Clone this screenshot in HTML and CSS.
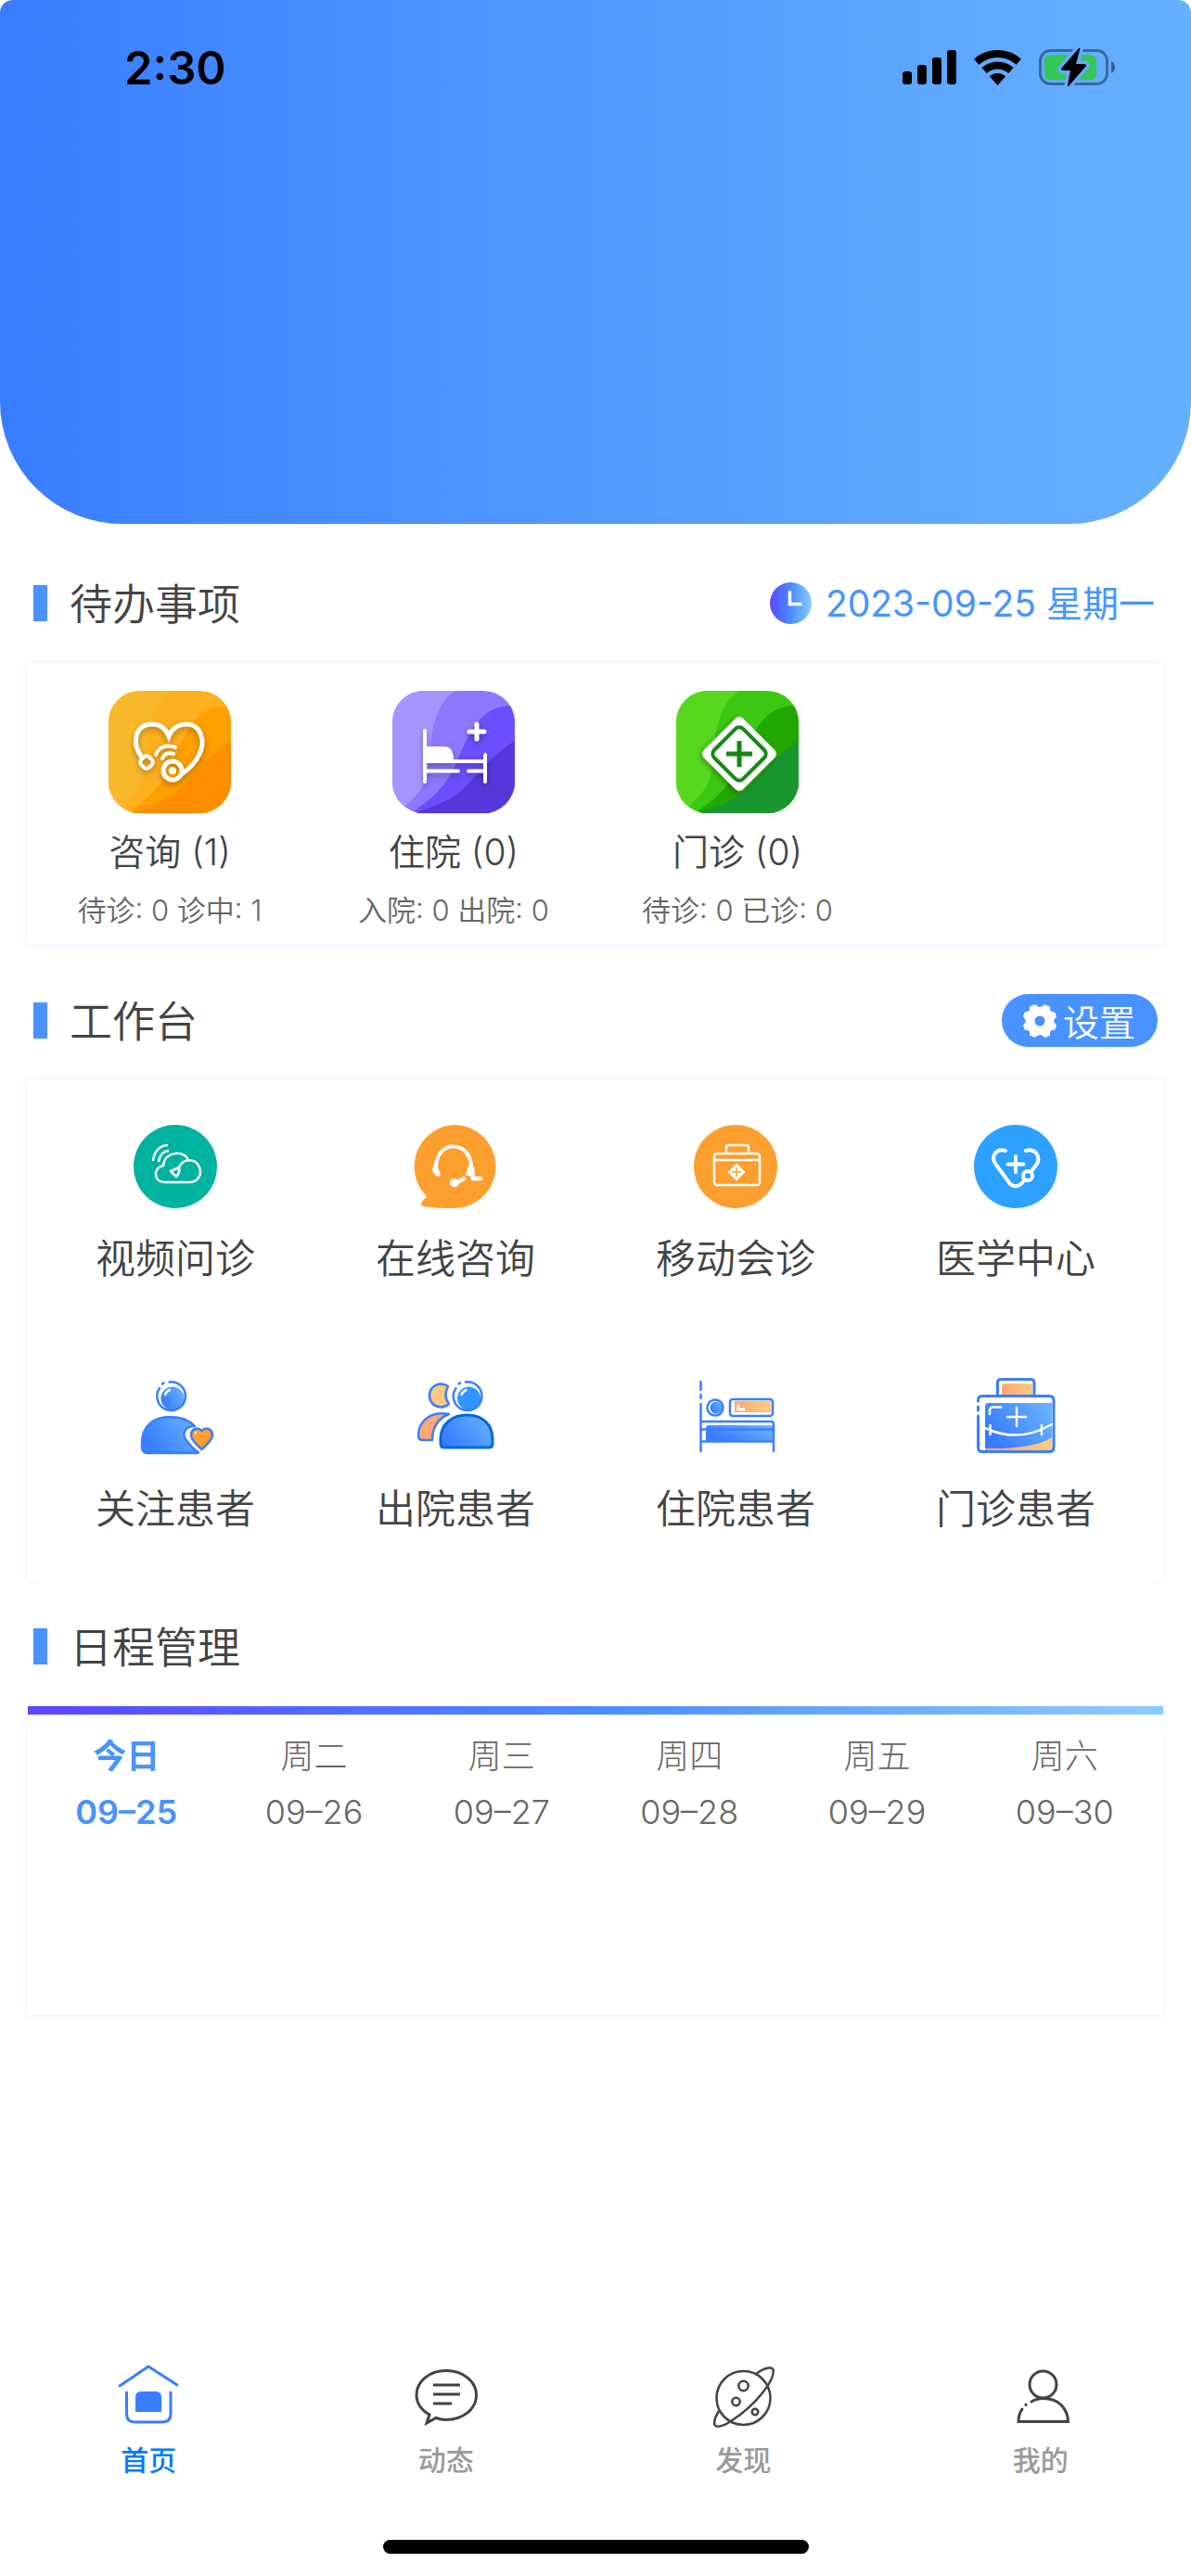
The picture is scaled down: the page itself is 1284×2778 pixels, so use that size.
FILE: index.html
```html
<!DOCTYPE html>
<html lang="zh-CN">
<head>
<meta charset="utf-8">
<meta name="viewport" content="width=device-width, initial-scale=1">
<title>首页</title>
<link rel="stylesheet" href="styles.css">
</head>
<body>
<svg class="defs" width="0" height="0" aria-hidden="true">
  <defs>
    <linearGradient id="blue" x1="0" y1="0.7" x2="1" y2="0.2"><stop offset="0.1" stop-color="#3a7eff"/><stop offset="1" stop-color="#68b2ff"/></linearGradient>
    <linearGradient id="peach" x1="0" y1="0" x2="1" y2="0"><stop offset="0" stop-color="#ffa573"/><stop offset="1" stop-color="#ffcd80"/></linearGradient>
    <linearGradient id="clock" x1="0" y1="0" x2="1" y2="0"><stop offset="0" stop-color="#5b45ff"/><stop offset="0.5" stop-color="#4a8cff"/><stop offset="1" stop-color="#8accff"/></linearGradient>
    <path id="wave-left" d="M0 0H69C50 8 42 40 41 60C38 85 42 100 14 124L0 132Z"/>
    <path id="wave-mid" d="M132 16H125C95 18 82 45 70 75C58 105 40 118 24 129V132H132Z"/>
    <path id="wave-low" d="M132 54C105 70 92 92 75 107C60 120 45 124 26 131V132H132Z"/>
  </defs>
</svg>

<header class="hero">
  <div class="status">
    <span class="time">2:30</span>
    <div class="signals">
      <svg width="58" height="38" viewBox="0 0 58 38" aria-hidden="true"><rect y="23" width="10" height="14" rx="3"/><rect x="16" y="16" width="10" height="21" rx="3"/><rect x="32" y="8" width="10" height="29" rx="3"/><rect x="48" width="10" height="37" rx="3"/></svg>
      <svg width="51" height="38" viewBox="0 0 51 38" aria-hidden="true"><g fill="none" stroke="#000" stroke-width="8"><path d="M2.7 12.7A34 34 0 0 1 48.300 12.7"/><path d="M11.100 22A21.500 21.500 0 0 1 39.900 22"/></g><path d="M25.500 38L16.800 28.300A13 13 0 0 1 34.200 28.300Z"/></svg>
      <svg width="83" height="44" viewBox="0 0 83 44" aria-hidden="true"><rect x="1.500" y="3.500" width="72" height="36" rx="11" fill="none" stroke="#000" stroke-opacity=".4" stroke-width="3"/><rect x="6" y="8" width="56" height="27" rx="6" fill="#34c759"/><path d="M78 15Q82 17 82 21.500T78 28Z" fill-opacity=".45"/><path d="M43 1L24 23Q24 25 26 25H34L31 41Q31 43 33 41L51 20Q51 18 49 18H40L44 3Q45 0 43 1Z" stroke="#61abff" stroke-width="7" stroke-linejoin="round"/><path d="M43 1L24 23Q24 25 26 25H34L31 41Q31 43 33 41L51 20Q51 18 49 18H40L44 3Q45 0 43 1Z"/></svg>
    </div>
  </div>
</header>

<main class="content">
  <section>
    <div class="section-head">
      <h2>待办事项</h2>
      <div class="today">
        <svg width="45" height="45" viewBox="0 0 45 45" aria-hidden="true"><circle cx="22.500" cy="22.500" r="22.500" fill="url(#clock)"/><path d="M21.500 10.500V23.500H33" fill="none" stroke="#fff" stroke-width="3.500" stroke-linecap="round"/></svg>
        <time datetime="2023-09-25">2023-09-25 星期一</time>
      </div>
    </div>
    <div class="card todo">
      <a class="todo-item" href="#consult">
        <svg class="todo-icon" viewBox="0 0 132 132" aria-hidden="true">
          <rect width="132" height="132" fill="#ffb01f"/><use href="#wave-left" fill="#f7b92b"/><use href="#wave-mid" fill="#ff9f00"/><use href="#wave-low" fill="#ff8f00"/>
          <g class="lifted" fill="none" stroke="#fff" stroke-width="5" stroke-linecap="round"><path d="M36 72C24 55 29 36 47 36C56 36 62 41 65 49C68 41 75 36 84 36C99 36 106 54 97 70C93 78 87 84 80 89"/><rect x="35" y="71" width="12" height="12" rx="4" transform="rotate(45 41 77)" stroke-width="4"/><circle cx="69" cy="86" r="10"/><path d="M51 69C54 61 62 57 72 61M58 73C60 68 64 66 70 68" stroke-width="4"/></g><circle cx="69" cy="86" r="4" fill="#fff"/>
        </svg>
        <span class="todo-name">咨询 (1)</span>
        <span class="todo-note">待诊: 0 诊中: 1</span>
      </a>
      <a class="todo-item" href="#inpatient">
        <svg class="todo-icon" viewBox="0 0 132 132" aria-hidden="true">
          <rect width="132" height="132" fill="#8e78ff"/><use href="#wave-left" fill="#a795ff"/><use href="#wave-mid" fill="#6d4eff"/><use href="#wave-low" fill="#5638da"/>
          <g class="lifted" fill="none" stroke="#fff" stroke-width="4" stroke-linecap="round"><path d="M35 43V98M100 69V98M35 76H100M35 86.500H71M82 86.500H100"/><path d="M91 36V52M83 44H99" stroke-width="5"/><path d="M36 60H57Q66 61 66 75H36Z" fill="#fff" stroke="none"/></g>
        </svg>
        <span class="todo-name">住院 (0)</span>
        <span class="todo-note">入院: 0 出院: 0</span>
      </a>
      <a class="todo-item" href="#outpatient">
        <svg class="todo-icon" viewBox="0 0 132 132" aria-hidden="true">
          <rect width="132" height="132" fill="#3bc813"/><use href="#wave-left" fill="#57d81f"/><use href="#wave-mid" fill="#21a800"/><use href="#wave-low" fill="#1a962f"/>
          <rect class="lifted" x="38" y="38" width="60" height="60" rx="6" fill="#fff" transform="rotate(45 68 68)"/><rect x="46" y="46" width="44" height="44" rx="6" fill="none" stroke="#188716" stroke-width="4" transform="rotate(45 68 68)"/><path d="M68 54V82M54 68H82" stroke="#188716" stroke-width="5"/>
        </svg>
        <span class="todo-name">门诊 (0)</span>
        <span class="todo-note">待诊: 0 已诊: 0</span>
      </a>
    </div>
  </section>

  <section>
    <div class="section-head">
      <h2>工作台</h2>
      <button class="settings" type="button">
        <svg width="36" height="36" viewBox="0 0 36 36" aria-hidden="true"><path fill="#fff" fill-rule="evenodd" d="M12 .5Q13 0 14 1Q18 5 22 1Q23 0 24 .5L28.500 2.500Q29.500 3 29 4.500Q28.500 8 33 8.500Q34.500 8.500 34.800 9.500L35.800 13Q36 14 35 14.500Q31.500 18 35 21.500Q36 22.500 35.800 23.500L34.500 27Q34 28 33 27.800Q28 28 29 32Q29.500 33.500 28.500 34L24 35.800Q23 36 22 35Q18 31 14 35Q13 36 12 35.500L7.500 33.800Q6.500 33 7 32Q8 28 3 27.800Q2 28 1.500 27L.200 23Q0 22 1 21.500Q4.500 18 1 14.500Q0 13.500 .2 12.500L1.500 9Q2 8 3 8.200Q8 8 7 4Q6.500 3 7.500 2.300ZM18 12.500A5.500 5.500 0 1 0 18 23.500A5.500 5.500 0 1 0 18 12.500Z"/></svg>
        设置
      </button>
    </div>
    <nav class="card tools" aria-label="工作台">
      <a class="tool" href="#video">
        <svg class="tool-icon" viewBox="0 0 90 90" aria-hidden="true"><circle cx="45" cy="45" r="45" fill="#00b39e"/><g fill="none" stroke="#fff" stroke-width="2.500" stroke-linejoin="round"><path d="M60 62H33C21 61 21 46 32 44C34 27 56 28 59 38"/><path d="M49 46C53 36 66 36 70 44C75 52 70 62 60 62M49 46L40 50L46 56C49 53 50 50 49 46Z"/><path d="M21 39C22 29 28 22 37 22M27 40C28 33 32 28 38 28"/></g></svg>
        <span>视频问诊</span>
      </a>
      <a class="tool" href="#online">
        <svg class="tool-icon" viewBox="0 0 90 90" aria-hidden="true"><path d="M45 0A45 45 0 0 1 50 89.500Q30 91 11 88Q6 87 9 83L14 77A45 45 0 0 1 45 0Z" fill="#fd9f2e"/><g fill="none" stroke="#fff" stroke-width="4" stroke-linecap="round"><path d="M24 44C26 16 60 17 62 44"/><path d="M63 47L64 58H72M45 63L54 58" stroke-width="4.500"/></g><path d="M23 41Q26 41 26 45L29 54Q27 57 23 54Q17 48 23 41ZM60 42H63Q68 50 63 56L56 54ZM44 58A5 4.500 0 1 0 44 67A5 4.500 0 1 0 44 58Z" fill="#fff"/></svg>
        <span>在线咨询</span>
      </a>
      <a class="tool" href="#mobile">
        <svg class="tool-icon" viewBox="0 0 90 90" aria-hidden="true"><circle cx="45" cy="45" r="45" fill="#fd9f2e"/><g fill="none" stroke="#fff" stroke-width="2.500"><rect x="22" y="31" width="49" height="34" rx="3"/><path d="M22 38H71M35 31V24Q35 22 37 22H57Q59 22 59 24V31"/></g><path d="M46 42L55 51L46 60L37 51Z" fill="#fff" stroke="#fff" stroke-linejoin="round"/><path d="M46 46V56M41 51H51" stroke="#fd9f2e" stroke-width="1.500"/></svg>
        <span>移动会诊</span>
      </a>
      <a class="tool" href="#center">
        <svg class="tool-icon" viewBox="0 0 90 90" aria-hidden="true"><circle cx="45" cy="45" r="45" fill="#2ca1ff"/><g fill="none" stroke="#fff" stroke-width="4" stroke-linecap="round"><path d="M34 28C24 25 18 34 23 42L37 61C41 68 49 68 54 60M56 28C66 25 72 34 68 42L62 50"/><circle cx="58" cy="55" r="5"/><path d="M45 34V51M36.500 42.500H53.500"/></g></svg>
        <span>医学中心</span>
      </a>
      <a class="tool" href="#followed">
        <svg class="tool-icon" viewBox="0 0 90 90" aria-hidden="true"><circle cx="42" cy="25" r="12.500" fill="url(#blue)"/><g fill="none" stroke="#3a7eff" stroke-width="2.500" stroke-linecap="round"><path d="M38.500 7.500A15.300 15.300 0 1 1 28 14"/><path d="M31 9.500L32.500 8.200"/></g><path d="M34 21Q36 17 39 16" fill="none" stroke="#fff" stroke-width="2.500" stroke-linecap="round"/><path d="M9 74C9 54 22 45 40 45C53 45 61 50 66 55C56 54 52 63 56 69C60 75 65 80 70 83.500L68 84H15Q9 84 9 77Z" fill="url(#blue)" stroke="#3a7eff" stroke-width="2.500" stroke-linejoin="round"/><path d="M73.500 60C69 55 62 58 62 65C62 70 69 76 73.500 80C78 76 85 70 85 65C85 58 78 55 73.500 60Z" fill="#ff9f2b" stroke="#3a7eff" stroke-width="2.500"/><path d="M66 63L68 61" stroke="#fff" stroke-width="1.500"/></svg>
        <span>关注患者</span>
      </a>
      <a class="tool" href="#discharged">
        <svg class="tool-icon" viewBox="0 0 90 90" aria-hidden="true"><g stroke="#3a7eff" stroke-width="2.500" stroke-linejoin="round"><path d="M37 12A12.500 12.500 0 1 0 38 31C33 25 34 18 37 12Z" fill="#ffca80"/><path d="M38 42C18 38 5 50 5 65Q5 70 9 70H20C20 56 27 46 38 42Z" fill="#ffa877"/></g><circle cx="59.500" cy="25" r="12.500" fill="#3395ff"/><g fill="none" stroke="#3a7eff" stroke-width="2.500" stroke-linecap="round"><path d="M56 7.500A15.300 15.300 0 1 1 45.500 14"/><path d="M48.500 9.500L50 8.200"/></g><path d="M51.500 21Q53.500 17 56.500 16" fill="none" stroke="#fff" stroke-width="2.500" stroke-linecap="round"/><path d="M29 69C29 52 42 43 57 43C73 43 85 52 85 69V74Q85 78 81 78H33Q29 78 29 74Z" fill="url(#blue)" stroke="#0068dd" stroke-width="3"/></svg>
        <span>出院患者</span>
      </a>
      <a class="tool" href="#admitted">
        <svg class="tool-icon" viewBox="0 0 90 90" aria-hidden="true"><circle cx="24" cy="35" r="6.500" fill="url(#blue)"/><rect x="44" y="28" width="39" height="12" fill="url(#peach)"/><path d="M13 57Q13 54 16 54H85V71H13Z" fill="url(#blue)"/><path d="M10 60V70" stroke="#fff" stroke-width="3"/><g fill="none" stroke="#3a7eff" stroke-width="2.500" stroke-linecap="round"><path d="M7.500 7V16M7.500 21V25M7.500 31V82M8 50H83Q86 50 86 53V82M8 58.500H85M8 71.500H85"/><circle cx="23" cy="35" r="8.500"/><rect x="39" y="26" width="46" height="18" rx="3"/></g><path d="M48 33V37H54" fill="none" stroke="#fff" stroke-width="3" stroke-linecap="round"/></svg>
        <span>住院患者</span>
      </a>
      <a class="tool" href="#clinic">
        <svg class="tool-icon" viewBox="0 0 90 90" aria-hidden="true"><path d="M30 13Q30 9 34 9H63V21H30Z" fill="url(#peach)"/><path d="M12 34Q12 30 16 30H84V81H12Z" fill="url(#blue)"/><path d="M12 79Q65 80 84 67V81H12Z" fill="url(#peach)"/><g fill="none" stroke="#3a7eff" stroke-width="3" stroke-linecap="round"><path d="M25.500 21V8Q25.500 4.500 29 4.500H61Q65 4.500 65 8V21M4.500 28V27Q4.500 22.500 9 22.500H81Q86 22.500 86 27V78Q86 82.500 81 82.500H9Q4.500 82.500 4.500 78V44M4.500 34V38"/></g><g fill="none" stroke="#fff" stroke-width="2.500" stroke-linecap="round"><path d="M12 57Q48 74 84 53M17.500 54V64M73 54V64M46 35V55M36 45H56M17 42V38Q17 34.500 21 34.500H29"/></g></svg>
        <span>门诊患者</span>
      </a>
    </nav>
  </section>

  <section>
    <div class="section-head over">
      <h2>日程管理</h2>
    </div>
    <div class="card schedule">
      <div class="days">
        <button class="day active" type="button"><span>今日</span><span class="date">09–25</span></button>
        <button class="day" type="button"><span>周二</span><span class="date">09–26</span></button>
        <button class="day" type="button"><span>周三</span><span class="date">09–27</span></button>
        <button class="day" type="button"><span>周四</span><span class="date">09–28</span></button>
        <button class="day" type="button"><span>周五</span><span class="date">09–29</span></button>
        <button class="day" type="button"><span>周六</span><span class="date">09–30</span></button>
      </div>
    </div>
  </section>
</main>

<footer class="bottom">
  <nav class="tabs" aria-label="主导航">
    <a class="tab active" href="#home">
      <svg class="tab-icon" viewBox="0 0 72 72" fill="none" stroke="#3a7eff" stroke-width="3" stroke-linecap="round" aria-hidden="true"><path d="M5 27L36 6L67 26M12.500 34V57Q12.500 66 21 66H51Q60 66 60 57V34"/><path d="M22 55V39Q22 33 28 33H44Q50 33 50 39V55Z" fill="#3a7eff" stroke="none"/></svg>
      <span>首页</span>
    </a>
    <a class="tab" href="#feed">
      <svg class="tab-icon" viewBox="0 0 72 72" fill="none" stroke="#434343" stroke-width="3" aria-hidden="true"><path d="M18 58C9 53 4 45 4 37C4 22 18 10.500 36 10.500S68.500 22 68.500 37S54 63.500 36 63.500Q30 63.500 25 61.500L15 67L18 58Z"/><path d="M22 26H51M22 36H51M22 46H42"/></svg>
      <span>动态</span>
    </a>
    <a class="tab" href="#discover">
      <svg class="tab-icon" viewBox="0 0 72 72" fill="none" stroke="#434343" stroke-width="2.500" aria-hidden="true"><circle cx="36.500" cy="40" r="29"/><path d="M50 14C60 7 67 6 68.500 9.500C71 20 50 48 23 65C14 71 7 72 5.500 69C4 65 7 59 10 54"/><circle cx="36.500" cy="27" r="5.200"/><circle cx="28.500" cy="44" r="4.200"/><circle cx="49" cy="55" r="3.300"/></svg>
      <span>发现</span>
    </a>
    <a class="tab" href="#mine">
      <svg class="tab-icon" viewBox="0 0 72 72" fill="none" stroke="#434343" stroke-width="3" stroke-linecap="round" aria-hidden="true"><circle cx="38.500" cy="25.500" r="14.500"/><path d="M26 44Q32 40.500 39 40.500C55 40.500 65 51 65.500 65.500H12Q12 58 16 52M20 47.500V47"/></svg>
      <span>我的</span>
    </a>
  </nav>
  <div class="home-bar"></div>
</footer>
</body>
</html>
```

FILE: styles.css
```css
* {
  box-sizing: border-box;
}

body {
  margin: 0;
  min-height: 100vh;
  display: flex;
  flex-direction: column;
  background: #fff;
  color: #434343;
  font-family: Inter, "Noto Sans CJK SC", sans-serif;
  font-weight: 350;
}

a {
  color: inherit;
  text-decoration: none;
}

button {
  margin: 0;
  padding: 0;
  border: 0;
  background: none;
  color: inherit;
  font: inherit;
}

.defs {
  position: absolute;
}

/* Top banner with the status bar */
.hero {
  height: 565px;
  border-radius: 14px 14px 132px 132px;
  background: linear-gradient(to right, #397dff, #529aff 50%, #66b1ff);
}

.status {
  display: flex;
  align-items: center;
  justify-content: space-between;
  height: 146px;
  padding: 0 81px 0 134px;
}

.time {
  color: #000;
  font-size: 49px;
  font-weight: 600;
}

.signals {
  display: flex;
  align-items: center;
  gap: 19px;
}

/* Sections */
.content {
  padding: 21px 30px 0;
}

.section-head {
  display: flex;
  align-items: center;
  justify-content: space-between;
  height: 129px;
  padding: 0 6px;
}

section + section .section-head {
  margin-top: 18px;
}

/* Hides the lower shadow of the card above */
section + section .section-head.over {
  position: relative;
  height: 135px;
  margin-top: 0;
  padding-top: 6px;
  border-radius: 16px;
  background: #fff;
}

h2 {
  display: flex;
  align-items: center;
  gap: 24px;
  margin: 0;
  font-size: 46px;
  font-weight: 350;
  line-height: 60px;
}

h2::before {
  content: "";
  width: 15px;
  height: 39px;
  background: #4893ff;
}

.today {
  display: flex;
  align-items: center;
  gap: 15px;
  padding-right: 3px;
  color: #4893ff;
  font-size: 39px;
  font-weight: 400;
  line-height: 48px;
}

.card {
  background: #fff;
  box-shadow: 0 0 9px rgba(72, 147, 255, 0.12);
}

/* To-do card */
.todo {
  display: grid;
  grid-template-columns: repeat(4, 1fr);
  padding: 30px 0 12px;
}

.todo-item {
  display: flex;
  flex-direction: column;
  align-items: center;
}

.todo-icon {
  width: 132px;
  height: 132px;
  border-radius: 34px;
}

.lifted {
  filter: drop-shadow(0 3px 3px rgba(0, 0, 0, 0.3));
}

.todo-name {
  margin-top: 12px;
  font-size: 39px;
  line-height: 60px;
}

.todo-note {
  margin-top: 9px;
  color: #666;
  font-size: 31px;
  line-height: 48px;
}

/* Workbench */
.settings {
  display: flex;
  align-items: center;
  gap: 7px;
  height: 57px;
  padding: 0 24px 0 23px;
  border-radius: 29px;
  background: #4893ff;
  color: #fff;
  font-family: "Noto Sans CJK SC", sans-serif;
  font-size: 39px;
  line-height: 57px;
}

.tools {
  display: grid;
  grid-template-columns: repeat(4, 1fr);
  padding: 0 8px;
}

.tool {
  display: flex;
  flex-direction: column;
  align-items: center;
  gap: 24px;
  padding: 48px 0;
  font-size: 43px;
  line-height: 60px;
}

.tool-icon {
  width: 90px;
  height: 90px;
}

/* Schedule */
.schedule {
  min-height: 333px;
}

.schedule::before {
  content: "";
  display: block;
  height: 9px;
  background: linear-gradient(to right, #5b45ff, #4a8cff 50%, #8accff);
}

.days {
  display: grid;
  grid-template-columns: repeat(6, 1fr);
  padding: 15px 5px;
}

.day {
  display: flex;
  flex-direction: column;
  align-items: center;
  color: #666;
  font-size: 36px;
  font-weight: 300;
  line-height: 60px;
}

.day.active {
  color: #4893ff;
  font-weight: 600;
}

/* Bottom tabs */
.bottom {
  margin-top: auto;
  padding-bottom: 24px;
}

.tabs {
  display: grid;
  grid-template-columns: repeat(4, 1fr);
  padding-right: 2px;
}

.tab {
  display: flex;
  flex-direction: column;
  align-items: center;
  gap: 12px;
  color: #999;
  font-size: 30px;
  font-weight: 500;
  line-height: 46px;
}

.tab.active {
  color: #007aff;
}

.tab-icon {
  width: 72px;
  height: 72px;
}

.home-bar {
  width: 459px;
  height: 15px;
  margin: 63px auto 0;
  border-radius: 8px;
  background: #000;
}
```
